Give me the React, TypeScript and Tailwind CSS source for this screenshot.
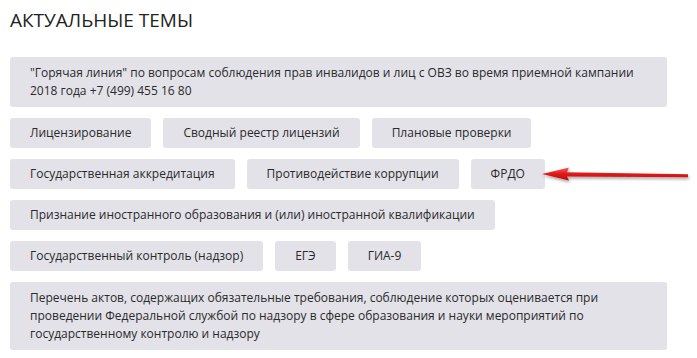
import React from "react";

const Btn = ({ children }: { children: React.ReactNode }) => (
  <div className="bg-[#e3e2e9] rounded-[3px] px-5 py-[6px] leading-[18px] text-[12px] text-[#2a2a2a]">
    {children}
  </div>
);

export default function App() {
  return (
    <div
      className="w-[697px] h-[358px] bg-white relative overflow-hidden"
      style={{ fontFamily: '"Open Sans", "Noto Sans", sans-serif' }}
    >
      <div className="pl-[10px] pt-[8px] w-[667px]">
        <h1 className="text-[19px] leading-[24px] text-[#222] font-normal">АКТУАЛЬНЫЕ ТЕМЫ</h1>
        <div className="mt-[25px] flex flex-col gap-[11px]">
          <div className="bg-[#e3e2e9] rounded-[3px] px-5 py-[7px] leading-[18px] text-[12px] text-[#2a2a2a]">
            "Горячая линия" по вопросам соблюдения прав инвалидов и лиц с ОВЗ во время приемной кампании
            <br />
            2018 года +7 (499) 455 16 80
          </div>
          <div className="flex gap-[12px]">
            <Btn>Лицензирование</Btn>
            <Btn>Сводный реестр лицензий</Btn>
            <Btn>Плановые проверки</Btn>
          </div>
          <div className="flex gap-[12px]">
            <Btn>Государственная аккредитация</Btn>
            <Btn>Противодействие коррупции</Btn>
            <Btn>ФРДО</Btn>
          </div>
          <div className="flex gap-[12px]">
            <Btn>Признание иностранного образования и (или) иностранной квалификации</Btn>
          </div>
          <div className="flex gap-[12px]">
            <Btn>Государственный контроль (надзор)</Btn>
            <Btn>ЕГЭ</Btn>
            <Btn>ГИА-9</Btn>
          </div>
          <div className="bg-[#e3e2e9] rounded-[3px] px-5 py-[7px] leading-[18px] text-[12px] text-[#2a2a2a]">
            Перечень актов, содержащих обязательные требования, соблюдение которых оценивается при
            <br />
            проведении Федеральной службой по надзору в сфере образования и науки мероприятий по
            <br />
            государственному контролю и надзору
          </div>
        </div>
      </div>
      <svg className="absolute left-[536px] top-[162px]" width="160" height="26" viewBox="0 0 160 26">
        <defs>
          <filter id="sh" x="-20%" y="-50%" width="140%" height="200%">
            <feDropShadow dx="1" dy="2" stdDeviation="1.5" floodColor="#000" floodOpacity="0.35" />
          </filter>
          <linearGradient id="g" x1="0" y1="0" x2="0" y2="1">
            <stop offset="0" stopColor="#ff5a5a" />
            <stop offset="0.5" stopColor="#e01818" />
            <stop offset="1" stopColor="#b80c0c" />
          </linearGradient>
        </defs>
        <g filter="url(#sh)">
          <path d="M6 12 L33 5.5 L31 10.3 L152 12.2 L152 15.2 L31 14.6 L33 18.5 Z" fill="url(#g)" />
        </g>
      </svg>
    </div>
  );
}
